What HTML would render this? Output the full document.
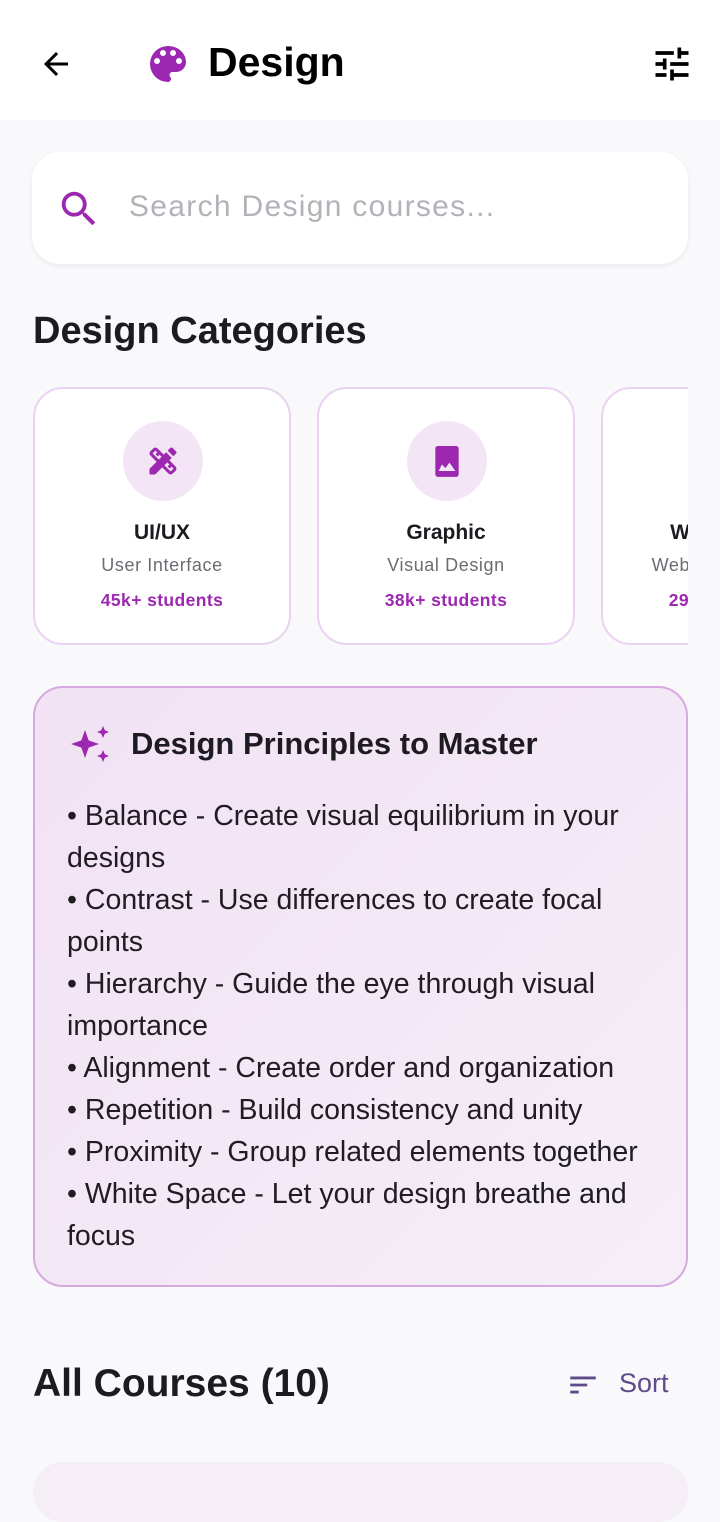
<!DOCTYPE html>
<html><head><meta charset="utf-8"><style>
*{margin:0;padding:0;box-sizing:border-box}
body{width:720px;height:1483px;overflow:hidden;background:#f9f8fa;font-family:"Liberation Sans",Roboto,sans-serif;color:#1d1b20;position:relative}
.hdr{position:absolute;left:0;top:0;width:720px;height:120px;background:#fff}
.abs{position:absolute}
.search{left:32px;top:152px;width:656px;height:112px;background:#fff;border-radius:28px;box-shadow:0 2px 6px rgba(0,0,0,.06)}
.card{top:387px;width:258px;height:258px;background:#fff;border:2px solid #ead3f0;border-radius:30px;text-align:center}
.circ{position:absolute;left:88px;top:32px;width:80px;height:80px;border-radius:50%;background:#f3e5f5}
.t1{position:absolute;left:0;right:0;top:132px;font-size:21px;font-weight:bold}
.t2{position:absolute;left:0;right:0;top:166px;font-size:18px;color:#6f6a72;letter-spacing:.6px}
.t3{position:absolute;left:0;right:0;top:201px;font-size:17.5px;color:#9c27b0;font-weight:bold;letter-spacing:.4px}
.box{left:33px;top:686px;width:655px;height:601px;border:2px solid #d6a9e0;border-radius:30px;background:linear-gradient(135deg,#f1e2f4,#f5eef7)}
.lines{position:absolute;left:32px;top:107px;font-size:28.5px;line-height:42px;color:#201c22}
</style></head><body>
<div class="hdr"></div>
<svg class="abs" style="left:38px;top:46px" width="36" height="36" viewBox="0 0 24 24"><path d="M20 11H7.8l5.6-5.6L12 4l-8 8 8 8 1.4-1.4L7.8 13H20z" fill="#000"/></svg>
<svg class="abs" style="left:144px;top:40px" width="48" height="48" viewBox="0 0 24 24"><path d="M12 3a9 9 0 0 0 0 18c.83 0 1.5-.67 1.5-1.5 0-.39-.15-.74-.39-1.01-.23-.26-.38-.61-.38-.99 0-.83.67-1.5 1.5-1.5H16c2.76 0 5-2.240 5-5 0-4.42-4.030-8-9-8zm-5.5 9a1.5 1.5 0 1 1 0-3 1.5 1.5 0 0 1 0 3zm3-4a1.5 1.5 0 1 1 0-3 1.5 1.5 0 0 1 0 3zm5 0a1.5 1.5 0 1 1 0-3 1.5 1.5 0 0 1 0 3zm3 4a1.5 1.5 0 1 1 0-3 1.5 1.5 0 0 1 0 3z" fill="#9c27b0"/></svg>
<div class="abs" style="left:208px;top:39px;font-size:41px;font-weight:bold;color:#000">Design</div>
<svg class="abs" style="left:650px;top:42px" width="44" height="44" viewBox="0 0 24 24"><path d="M3 17v2h6v-2H3zM3 5v2h10V5H3zm10 16v-2h8v-2h-8v-2h-2v6h2zM7 9v2H3v2h4v2h2V9H7zm14 4v-2H11v2h10zm-6-4h2V7h4V5h-4V3h-2v6z" fill="#000"/></svg>
<div class="abs search"></div>
<svg class="abs" style="left:56px;top:186px" width="46" height="46" viewBox="0 0 24 24"><path d="M15.5 14h-.79l-.28-.27A6.47 6.47 0 0 0 16 9.5 6.5 6.5 0 1 0 9.5 16c1.61 0 3.09-.59 4.23-1.57l.27.28v.79l5 4.99L20.49 19l-4.99-5zm-6 0C7.01 14 5 11.99 5 9.5S7.01 5 9.5 5 14 7.01 14 9.5 11.99 14 9.5 14z" fill="#9c27b0"/></svg>
<div class="abs" style="left:129px;top:190px;font-size:30px;color:#b5b1b8;letter-spacing:1.3px">Search Design courses...</div>
<div class="abs" style="left:33px;top:310px;font-size:38px;font-weight:bold">Design Categories</div>
<div class="abs" style="left:0;top:380px;width:688px;height:270px;overflow:hidden">
<div class="abs card" style="left:33px;top:7px"><div class="circ"><svg style="position:absolute;left:22px;top:22px" width="36" height="36" viewBox="0 0 24 24"><path d="M16.24 11.51l1.57-1.57-3.75-3.75-1.57 1.57L8.35 3.63c-.78-.78-2.05-.78-2.830 0l-1.9 1.9c-.78.78-.78 2.05 0 2.83l4.13 4.13L3 17.25V21h3.75l4.76-4.76 4.13 4.13c.95.95 2.23.6 2.83 0l1.9-1.9c.78-.78.78-2.05 0-2.83l-4.13-4.13zm-7.06-.44L5.04 6.94l1.89-1.9L8.2 6.31 7.02 7.5l1.41 1.41 1.19-1.19 1.45 1.45-1.89 1.9zm7.88 7.89l-4.13-4.14 1.9-1.9 1.45 1.45-1.19 1.19 1.41 1.41 1.19-1.19 1.27 1.27-1.9 1.91zM20.71 7.04a.996.996 0 0 0 0-1.41l-2.34-2.34c-.47-.47-1.12-.29-1.41 0l-1.83 1.83 3.75 3.75 1.83-1.83z" fill="#9c27b0"/></svg></div><div class="t1">UI/UX</div><div class="t2">User Interface</div><div class="t3">45k+ students</div></div>
<div class="abs card" style="left:317px;top:7px"><div class="circ"><svg style="position:absolute;left:20px;top:20px" width="40" height="40" viewBox="0 0 24 24"><path d="M19 20V4.5c0-.8-.7-1.5-1.5-1.5h-11C5.7 3 5 3.7 5 4.5V20c0 .8.7 1.5 1.5 1.5h11c.8 0 1.5-.7 1.5-1.5zM9 14l2 2.3 2.5-3.3 3.5 5H7z" fill="#9c27b0"/></svg></div><div class="t1">Graphic</div><div class="t2">Visual Design</div><div class="t3">38k+ students</div></div>
<div class="abs card" style="left:601px;top:7px"><div class="circ"></div><div class="t1">Web Design</div><div class="t2">Web Development</div><div class="t3">29k+ students</div></div>
</div>
<div class="abs box">
<svg class="abs" style="left:32px;top:34px" width="48" height="48" viewBox="0 0 24 24"><path d="M9 4l1.8 5.2L16 11l-5.2 1.8L9 18l-1.8-5.2L2 11l5.2-1.8zM18 2l.9 2.1L21 5l-2.1.9L18 8l-.9-2.1L15 5l2.1-.9zM18 14l.9 2.1L21 17l-2.1.9L18 20l-.9-2.1L15 17l2.1-.9z" fill="#9c27b0"/></svg>
<div class="abs" style="left:96px;top:38px;font-size:31px;font-weight:bold">Design Principles to Master</div>
<div class="lines">• Balance - Create visual equilibrium in your<br>designs<br>• Contrast - Use differences to create focal<br>points<br>• Hierarchy - Guide the eye through visual<br>importance<br>• Alignment - Create order and organization<br>• Repetition - Build consistency and unity<br>• Proximity - Group related elements together<br>• White Space - Let your design breathe and<br>focus</div>
</div>
<div class="abs" style="left:33px;top:1362px;font-size:39px;font-weight:bold">All Courses (10)</div>
<svg class="abs" style="left:566px;top:1368px" width="34" height="34" viewBox="0 0 24 24"><path d="M3 18h6v-2H3v2zM3 6v2h18V6H3zm0 7h12v-2H3v2z" fill="#5f4b8b"/></svg>
<div class="abs" style="left:619px;top:1368px;font-size:27px;color:#5f4b8b">Sort</div>
<div class="abs" style="left:33px;top:1462px;width:655px;height:60px;background:#f5eef7;border-radius:30px"></div>
</body></html>
